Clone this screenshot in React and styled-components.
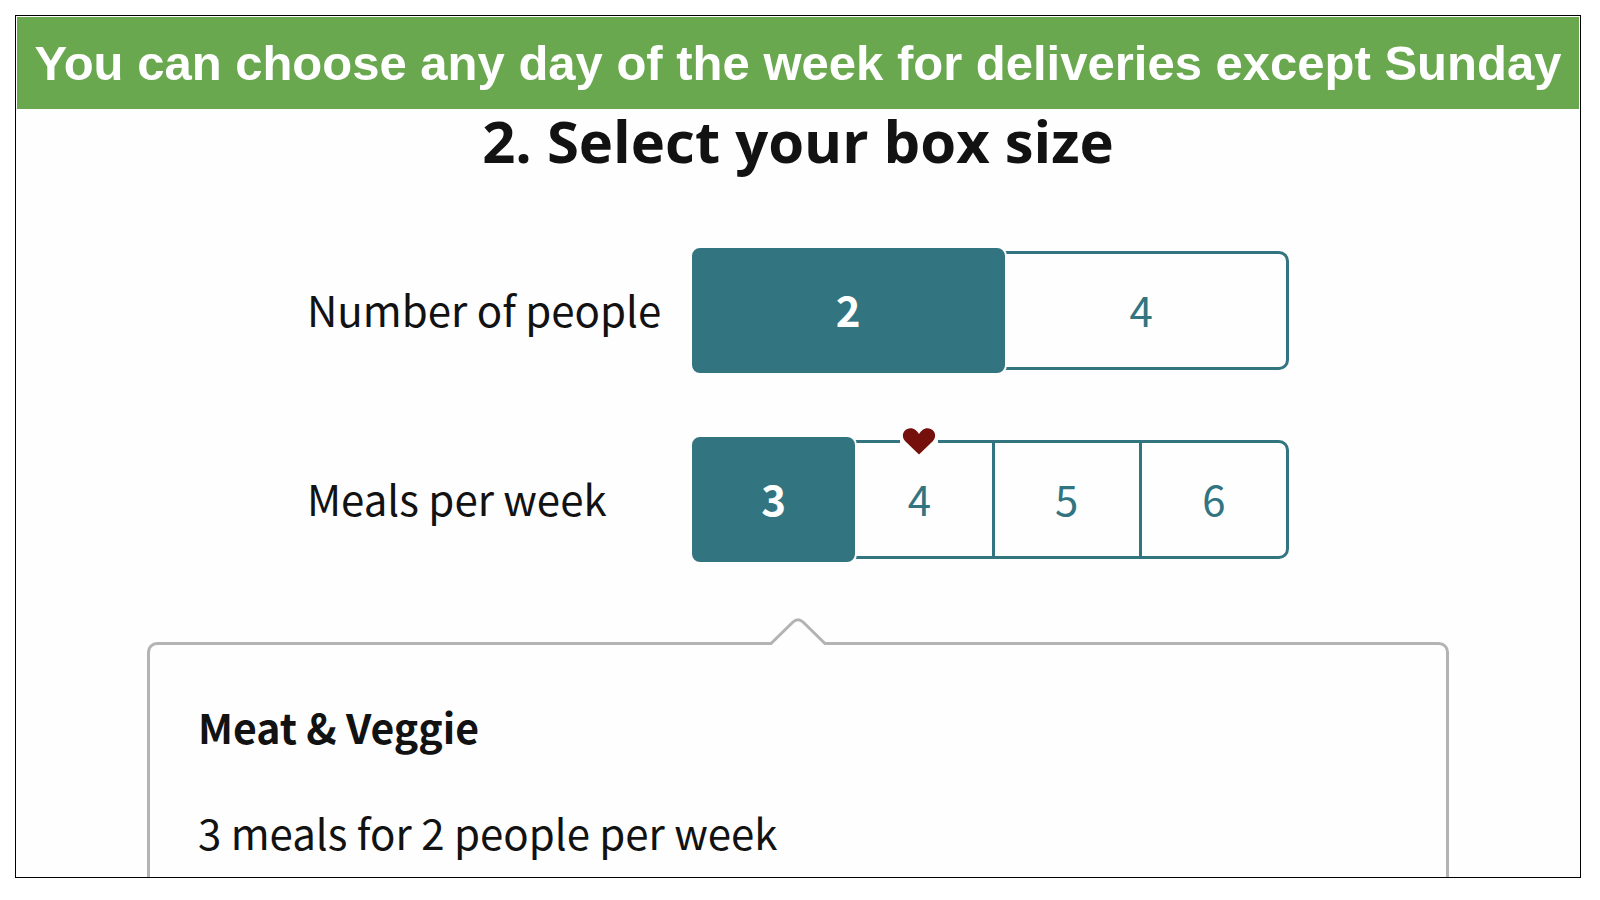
import React, { useState } from "react";
import styled, { createGlobalStyle, css } from "styled-components";

const TEAL = "#327580";
const PAPER = "#fefefe";
const INK = "#121212";
const CARD_LINE = "#b3b3b3";

const GlobalStyle = createGlobalStyle`
  *, *::before, *::after { box-sizing: border-box; }
  body {
    margin: 0;
    background: #fff;
    color: ${INK};
    font-family: "Noto Sans CJK SC", "Noto Sans", sans-serif;
  }
`;

const Page = styled.div`
  display: flex;
  min-height: 100vh;
  padding: 15px 19px 22px 15px;
`;

const Frame = styled.main`
  flex: 1;
  min-width: 0;
  display: flex;
  flex-direction: column;
  padding: 1px 1px 0;
  background: ${PAPER};
  border: 1px solid #000;
`;

const Banner = styled.p`
  margin: 0;
  padding: 16px 12px;
  background: #6aa84f;
  color: #fff;
  font: 700 49px/60px "Liberation Sans", Arial, sans-serif;
  text-align: center;
`;

const Heading = styled.h1`
  margin: 0;
  font: 700 58px/64px "Open Sans", sans-serif;
  text-align: center;
`;

const Form = styled.div`
  display: flex;
  flex-direction: column;
  gap: 70px;
  width: 100%;
  max-width: 982px;
  margin: 78px auto 0;
`;

const Row = styled.div`
  display: flex;
  height: 119px;
`;

const RowLabel = styled.span`
  flex: 0 0 385px;
  align-self: center;
  padding-bottom: 4px;
  font-size: 42px;
  line-height: 60px;
`;

const Options = styled.div`
  flex: 1;
  display: flex;
`;

const Option = styled.button`
  position: relative;
  flex: 1;
  padding: 0 0 4px;
  background: ${PAPER};
  border: solid ${TEAL};
  border-width: 3px 0 3px 3px;
  color: ${TEAL};
  font: inherit;
  font-size: 42px;
  line-height: 60px;
  cursor: pointer;

  &:first-child { border-radius: 10px 0 0 10px; }
  &:last-child {
    border-right-width: 3px;
    border-radius: 0 10px 10px 0;
  }

  ${({ $selected, $count }) =>
    $selected &&
    css`
      && {
        z-index: 1;
        flex: 0 0 calc(100% / ${$count} + 14px);
        margin: -3px -11px -3px 0;
        background: ${TEAL};
        border-width: 3px;
        border-radius: 8px;
        box-shadow: 0 0 0 2px ${PAPER};
        color: #fff;
        font-weight: 700;
      }
    `}
`;

const HeartBadge = styled.svg`
  position: absolute;
  top: -18px;
  left: 50%;
  width: 42px;
  height: 32px;
  transform: translateX(-50%);
`;

const Card = styled.section`
  position: relative;
  flex: 1;
  margin: 83px 130px 0;
  padding: 51px 48px 14px;
  border: 3px solid ${CARD_LINE};
  border-bottom: 0;
  border-radius: 10px 10px 0 0;
`;

const CardPointer = styled.svg`
  position: absolute;
  top: -28px;
  left: 50%;
  width: 60px;
  height: 30px;
  transform: translateX(-50%);
`;

const CardTitle = styled.h2`
  margin: 0 0 46px;
  font-size: 41px;
  font-weight: 700;
  line-height: 60px;
`;

const CardText = styled.p`
  margin: 0;
  font-size: 42px;
  line-height: 60px;
`;

function Heart() {
  return (
    <HeartBadge viewBox="0 0 42 32" aria-label="Most popular" role="img">
      <rect x="2" y="12" width="38" height="12" fill={PAPER} />
      <path
        d="M21 29.500 L7.500 16.500 C4.500 13.500 4 9 6.500 6 C9.500 2.500 14.500 2.500 17.500 5 Q19.500 6.500 21 9 Q22.500 6.500 24.500 5 C27.500 2.500 32.500 2.500 35.500 6 C38 9 37.500 13.500 34.500 16.500 Z"
        fill="#75100c"
      />
    </HeartBadge>
  );
}

function OptionRow({ id, label, values, popular, value, onChange }) {
  return (
    <Row>
      <RowLabel id={id}>{label}</RowLabel>
      <Options role="group" aria-labelledby={id}>
        {values.map((v) => (
          <Option
            key={v}
            type="button"
            $selected={v === value}
            $count={values.length}
            aria-pressed={v === value}
            onClick={() => onChange(v)}
          >
            {v === popular && <Heart />}
            {v}
          </Option>
        ))}
      </Options>
    </Row>
  );
}

export default function App() {
  const [people, setPeople] = useState(2);
  const [meals, setMeals] = useState(3);

  return (
    <Page>
      <GlobalStyle />
      <Frame>
        <Banner>You can choose any day of the week for deliveries except Sunday</Banner>
        <Heading>2. Select your box size</Heading>
        <Form>
          <OptionRow
            id="people-label"
            label="Number of people"
            values={[2, 4]}
            value={people}
            onChange={setPeople}
          />
          <OptionRow
            id="meals-label"
            label="Meals per week"
            values={[3, 4, 5, 6]}
            popular={4}
            value={meals}
            onChange={setMeals}
          />
        </Form>
        <Card>
          <CardPointer viewBox="0 0 60 30" aria-hidden="true">
            <path d="M3 29 L3 25 L25 4 Q30 0 35 4 L57 25 L57 29 Z" fill={PAPER} />
            <path
              d="M0 26.500 L3 26.500 L25 5 Q30 0.500 35 5 L57 26.500 L60 26.500"
              fill="none"
              stroke={CARD_LINE}
              strokeWidth="3"
            />
          </CardPointer>
          <CardTitle>Meat &amp; Veggie</CardTitle>
          <CardText>{`${meals} meals for ${people} people per week`}</CardText>
        </Card>
      </Frame>
    </Page>
  );
}
